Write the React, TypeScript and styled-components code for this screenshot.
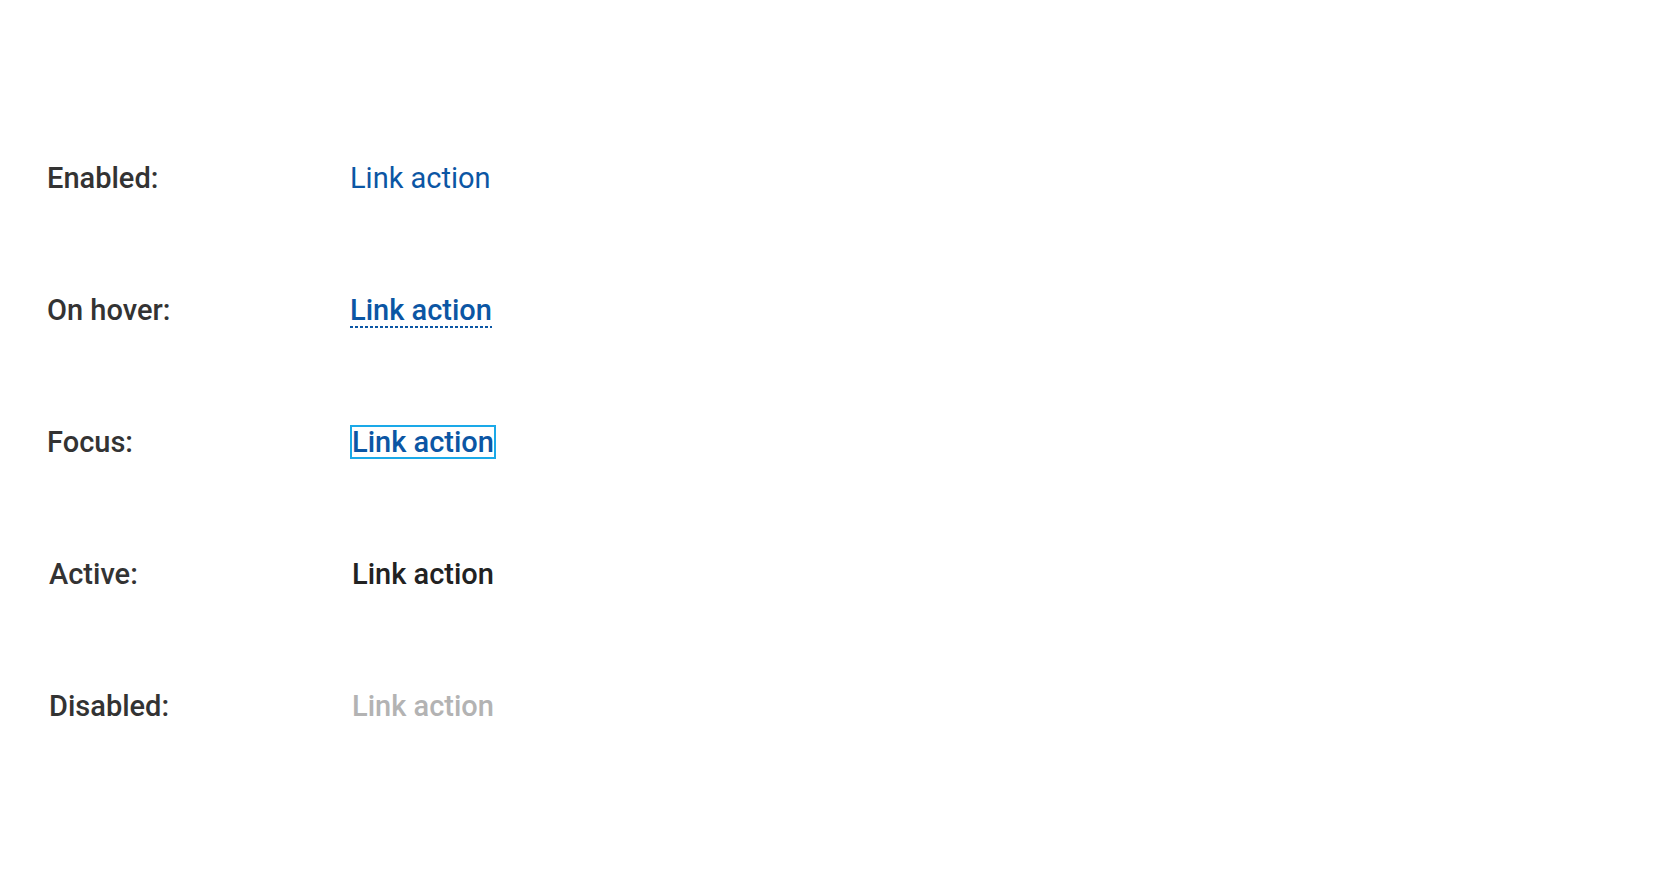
import { createGlobalStyle, css, styled } from 'styled-components'

type Variant = 'enabled' | 'hover' | 'focus' | 'active' | 'disabled'

const rows: { label: string; variant: Variant; shift?: boolean }[] = [
    { label: 'Enabled:', variant: 'enabled' },
    { label: 'On hover:', variant: 'hover' },
    { label: 'Focus:', variant: 'focus' },
    { label: 'Active:', variant: 'active', shift: true },
    { label: 'Disabled:', variant: 'disabled', shift: true },
]

const GlobalStyle = createGlobalStyle`
    html, body {
        margin: 0;
        padding: 0;
        background: #fff;
    }
    body {
        font-family: Roboto, 'Liberation Sans', Arial, sans-serif;
        -webkit-font-smoothing: antialiased;
    }
`

export default function App() {
    return (
        <>
            <GlobalStyle />
            <Page>
                <StateList>
                    {rows.map((row) => (
                        <StateRow key={row.variant} $shift={row.shift}>
                            <Label>{row.label}</Label>
                            <div>
                                <LinkAction
                                    href="#"
                                    $variant={row.variant}
                                    aria-disabled={row.variant === 'disabled'}
                                    onClick={(e) => e.preventDefault()}
                                >
                                    Link action
                                </LinkAction>
                            </div>
                        </StateRow>
                    ))}
                </StateList>
            </Page>
        </>
    )
}

const Page = styled.main`
    width: 100%;
    min-height: 884px;
    padding: 112px 0 0 47px;
    box-sizing: border-box;
`

const StateList = styled.div`
    display: flex;
    flex-direction: column;
`

const StateRow = styled.div<{ $shift?: boolean }>`
    display: grid;
    grid-template-columns: 303px auto;
    align-items: center;
    height: 132px;
    padding-left: ${(p) => (p.$shift ? '2px' : '0')};
`

const Label = styled.span`
    font-size: 29px;
    font-weight: 500;
    color: #333;
`

const BLUE = '#0b56a4'

const variants = {
    enabled: css`
        font-weight: 400;
        color: ${BLUE};
    `,
    hover: css`
        display: inline-block;
        line-height: 29px;
        padding-bottom: 3px;
        margin-bottom: -3px;
        color: ${BLUE};
        /* dotted underline: 3px dash, 2px gap */
        background-image: repeating-linear-gradient(
            to right,
            ${BLUE} 0 3px,
            transparent 3px 5px
        );
        background-size: 100% 2px;
        background-position: 0 100%;
        background-repeat: no-repeat;
    `,
    focus: css`
        display: inline-block;
        line-height: 30px;
        padding: 0;
        color: ${BLUE};
        border: 2px solid #1aa9e8;
    `,
    active: css`
        color: #222;
    `,
    disabled: css`
        color: #b3b3b3;
        cursor: default;
    `,
}

const LinkAction = styled.a<{ $variant: Variant }>`
    font-size: 29px;
    font-weight: 500;
    text-decoration: none;
    outline: none;
    ${(p) => variants[p.$variant]}
`
